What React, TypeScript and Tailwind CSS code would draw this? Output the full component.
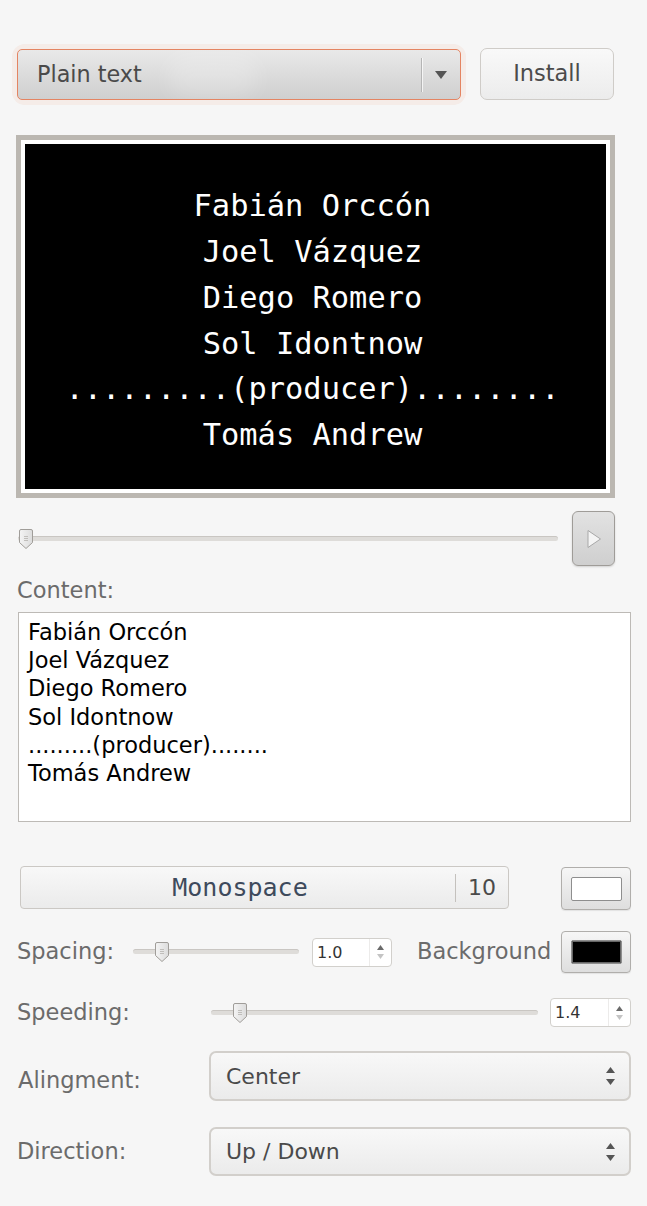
import React from "react";

const Thumb = () => (
  <svg width="16" height="22" viewBox="0 0 16 22" className="block">
    <defs>
      <linearGradient id="tg" x1="0" y1="0" x2="1" y2="0">
        <stop offset="0" stopColor="#f4f4f4" />
        <stop offset="1" stopColor="#dcdcdc" />
      </linearGradient>
    </defs>
    <path
      d="M3 1.5h10a1.5 1.5 0 0 1 1.5 1.5v11.5L8 20.5 1.5 14.5V3A1.5 1.5 0 0 1 3 1.5z"
      fill="url(#tg)"
      stroke="#a09d99"
    />
    <path d="M6 8.5h4M6 10.5h4M6 12.5h4" stroke="#b5b2ae" strokeWidth="0.8" />
  </svg>
);

const Slider = ({ width, thumbAt }: { width: number; thumbAt: number }) => (
  <div className="relative h-[22px]" style={{ width }}>
    <div className="absolute left-0 right-0 top-[8px] h-[5px] rounded-full bg-[#dedcd9] border-t border-[#c9c6c2]" />
    <div className="absolute top-0" style={{ left: thumbAt }}>
      <Thumb />
    </div>
  </div>
);

const SpinBox = ({ value, width }: { value: string; width: number }) => (
  <div
    className="flex h-[29px] rounded-[4px] border border-[#d2d0cc] bg-white"
    style={{ width }}
  >
    <div className="flex-1 pl-[4px] text-[16px] leading-[27px] text-[#333]">{value}</div>
    <div className="flex w-[22px] flex-col items-center justify-center gap-[4px] border-l border-[#ecebea]">
      <svg width="7" height="5" viewBox="0 0 7 5"><path d="M0 5L3.5 0 7 5z" fill="#6a6a6a" /></svg>
      <svg width="7" height="5" viewBox="0 0 7 5"><path d="M0 0L3.5 5 7 0z" fill="#c4c4c4" /></svg>
    </div>
  </div>
);

const UpDown = () => (
  <div className="flex flex-col items-center gap-[6px]">
    <svg width="9" height="6" viewBox="0 0 9 6"><path d="M0 6L4.5 0 9 6z" fill="#555" /></svg>
    <svg width="9" height="6" viewBox="0 0 9 6"><path d="M0 0L4.5 6 9 0z" fill="#555" /></svg>
  </div>
);

const Combo = ({ text, height }: { text: string; height: number }) => (
  <div
    className="flex w-[422px] items-center justify-between rounded-[7px] border-2 border-[#d2cfcb] bg-gradient-to-b from-[#f8f8f8] to-[#ebebeb] pl-[15px] pr-[14px] text-[22px] text-[#4a4a4a]"
    style={{ height }}
  >
    <span>{text}</span>
    <UpDown />
  </div>
);

const ColorButton = ({ color, height }: { color: string; height: number }) => (
  <div
    className="flex w-[70px] items-center justify-center rounded-[4px] border border-[#b0aeab] bg-gradient-to-b from-[#f6f6f6] to-[#dedede] shadow-[0_1px_1px_rgba(0,0,0,0.08)]"
    style={{ height }}
  >
    <div
      className="h-[24px] w-[51px] rounded-[2px] border border-[#8e8e8e] shadow-[inset_0_0_0_1px_rgba(255,255,255,0.4)]"
      style={{ background: color }}
    />
  </div>
);

export default function App() {
  const lines = [
    "Fabián Orccón",
    "Joel Vázquez",
    "Diego Romero",
    "Sol Idontnow",
    ".........(producer)........",
    "Tomás Andrew",
  ];
  return (
    <div className="relative h-[1206px] w-[647px] overflow-hidden bg-[#f6f6f6] font-['DejaVu_Sans',sans-serif]">
      {/* Top row */}
      <div className="flex pl-[17px] pt-[48px]">
        <div className="mt-[1px] rounded-[8px] shadow-[0_0_0_5px_rgba(240,150,110,0.10)]">
          <div className="relative flex h-[51px] w-[444px] items-center overflow-hidden rounded-[5px] border border-[#e48462] bg-gradient-to-b from-[#e9e9e9] to-[#cfcfcf]">
            <div className="absolute left-[150px] top-[4px] h-[44px] w-[90px] rounded-full bg-white/20 blur-[10px]" />
            <span className="relative flex-1 pl-[19px] text-[22.3px] text-[#4a4a4a]">Plain text</span>
            <div className="relative h-[34px] w-px bg-[#b5b5b5] shadow-[1px_0_0_rgba(255,255,255,0.7)]" />
            <div className="relative flex w-[38px] justify-center">
              <svg width="12" height="8" viewBox="0 0 12 8"><path d="M0 0h12L6 8z" fill="#555" /></svg>
            </div>
          </div>
        </div>
        <div className="ml-[19px] flex h-[52px] w-[134px] items-center justify-center rounded-[7px] border border-[#cfccc8] bg-gradient-to-b from-[#f9f9f9] to-[#ececec] text-[22.5px] text-[#4b4b4b]">
          Install
        </div>
      </div>

      {/* Preview */}
      <div className="ml-[16px] mt-[35px] h-[363px] w-[599px] border-[5px] border-[#bbb7b1] bg-white p-[4px]">
        <div className="flex h-full w-full flex-col items-center justify-center bg-black pr-[6px] pt-[8px] font-['DejaVu_Sans_Mono',monospace] text-[30.4px] leading-[45.7px] text-white">
          {lines.map((l) => (
            <div key={l} className="whitespace-pre">{l}</div>
          ))}
        </div>
      </div>

      {/* Slider row */}
      <div className="mt-[13px] flex h-[55px] items-center pl-[18px]">
        <Slider width={540} thumbAt={0} />
        <div className="ml-[14px] flex h-[55px] w-[43px] items-center justify-center rounded-[6px] border border-[#9f9c98] bg-gradient-to-b from-[#e2e2e2] to-[#cfcfcf] shadow-[0_1px_2px_rgba(0,0,0,0.15)]">
          <svg width="16" height="20" viewBox="0 0 16 20">
            <path d="M2 1.5L14.5 10 2 18.5z" fill="#f4f4f4" stroke="#a8a8a8" strokeWidth="1" />
          </svg>
        </div>
      </div>

      {/* Content */}
      <div className="mt-[11px] pl-[17px] text-[22.5px] leading-[26px] text-[#6b6b6b]">Content:</div>
      <div className="ml-[18px] mt-[9px] h-[210px] w-[613px] border border-[#bdbab6] bg-white pl-[9px] pt-[5px] text-[22.5px] leading-[28.2px] text-black">
        {lines.map((l) => (
          <div key={l} className="whitespace-pre">{l}</div>
        ))}
      </div>

      {/* Font row */}
      <div className="mt-[44px] flex pl-[20px]">
        <div className="flex h-[43px] w-[489px] items-center rounded-[4px] border border-[#cbc8c4] bg-gradient-to-b from-[#f8f8f8] to-[#ebebeb]">
          <div className="flex-1 pl-[4px] text-center font-['DejaVu_Sans_Mono',monospace] text-[25px] text-[#3e4a5c]">Monospace</div>
          <div className="h-[28px] w-px bg-[#c4c1bd]" />
          <div className="w-[52px] text-center text-[22px] text-[#4a4a4a]">10</div>
        </div>
        <div className="ml-[52px] mt-[1px]">
          <ColorButton color="#ffffff" height={43} />
        </div>
      </div>

      {/* Spacing row */}
      <div className="mt-[21px] flex h-[42px] items-center pl-[17px]">
        <div className="w-[116px] text-[22.5px] text-[#6b6b6b]">Spacing:</div>
        <Slider width={166} thumbAt={21} />
        <div className="ml-[13px]">
          <SpinBox value="1.0" width={80} />
        </div>
        <div className="ml-[25px] w-[144px] text-[22.5px] text-[#6b6b6b]">Background</div>
        <ColorButton color="#000000" height={42} />
      </div>

      {/* Speeding row */}
      <div className="mt-[25px] flex h-[29px] items-center pl-[17px]">
        <div className="w-[194px] text-[22.5px] text-[#6b6b6b]">Speeding:</div>
        <Slider width={327} thumbAt={21} />
        <div className="ml-[12px]">
          <SpinBox value="1.4" width={81} />
        </div>
      </div>

      {/* Alignment row */}
      <div className="mt-[24px] flex items-center pl-[18px]">
        <div className="w-[191px] pt-[9px] text-[22.5px] text-[#6b6b6b]">Alingment:</div>
        <Combo text="Center" height={50} />
      </div>

      {/* Direction row */}
      <div className="mt-[26px] flex items-center pl-[17px]">
        <div className="w-[192px] text-[22.5px] text-[#6b6b6b]">Direction:</div>
        <Combo text="Up / Down" height={49} />
      </div>
    </div>
  );
}
